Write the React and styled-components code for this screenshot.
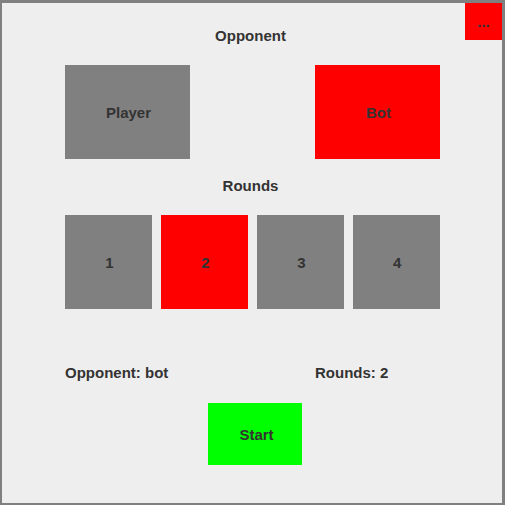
import React, { useState } from 'react'
import styled, { createGlobalStyle } from 'styled-components'

const GlobalStyle = createGlobalStyle`
  html, body {
    margin: 0;
    padding: 0;
    background: #eeeeee;
  }
  * { box-sizing: border-box; }
`;

const Frame = styled.div`
  position: relative;
  width: 505px;
  height: 505px;
  background: #eeeeee;
  border: 2px solid #808080;
  border-top-width: 3px;
  border-right-width: 3px;
  font-family: "Liberation Sans", Arial, sans-serif;
  font-weight: bold;
  font-size: 15px;
  color: #333333;
`;

const MenuButton = styled.button`
  position: absolute;
  top: 0;
  right: 0;
  width: 37px;
  height: 37px;
  border: none;
  padding: 0;
  background: #ff0000;
  color: #333333;
  font-family: inherit;
  font-weight: bold;
  font-size: 15px;
`;

const Content = styled.div`
  display: flex;
  flex-direction: column;
  padding: 0 62px 0 63px;
`;

const Title = styled.div`
  text-align: center;
  line-height: 18px;
  padding-right: 4px;
  margin-top: ${p => p.$top}px;
`;

const OpponentRow = styled.div`
  display: flex;
  justify-content: space-between;
  margin-top: 20px;
`;

const Choice = styled.div`
  display: flex;
  align-items: center;
  justify-content: center;
  width: ${p => p.$w}px;
  height: 94px;
  padding-left: 2px;
  background: ${p => (p.$active ? '#ff0000' : '#808080')};
  cursor: pointer;
`;

const RoundsGrid = styled.div`
  display: grid;
  grid-template-columns: repeat(4, 1fr);
  column-gap: 8.67px;
  margin-top: 20px;
`;

const InfoRow = styled.div`
  display: flex;
  justify-content: space-between;
  margin-top: 55px;
  line-height: 18px;
`;

const Info = styled.div`
  width: 125px;
  white-space: nowrap;
`;

const StartButton = styled.button`
  align-self: flex-start;
  margin: 21px 0 0 143px;
  width: 94px;
  height: 62px;
  border: none;
  padding: 0 0 0 3px;
  background: #00ff00;
  color: #333333;
  font-family: inherit;
  font-weight: bold;
  font-size: 15px;
`;

export default function App() {
  const [opponent, setOpponent] = useState('bot')
  const [rounds, setRounds] = useState(2)

  return (
    <>
      <GlobalStyle />
      <Frame>
        <Content>
          <Title $top={24}>Opponent</Title>
          <OpponentRow>
            <Choice $w={125} $active={opponent === 'player'} onClick={() => setOpponent('player')}>Player</Choice>
            <Choice $w={125} $active={opponent === 'bot'} onClick={() => setOpponent('bot')}>Bot</Choice>
          </OpponentRow>

          <Title $top={18}>Rounds</Title>
          <RoundsGrid>
            {[1, 2, 3, 4].map(n => (
              <Choice key={n} $w={87} $active={rounds === n} onClick={() => setRounds(n)}>{n}</Choice>
            ))}
          </RoundsGrid>

          <InfoRow>
            <Info>Opponent: {opponent}</Info>
            <Info>Rounds: {rounds}</Info>
          </InfoRow>

          <StartButton>Start</StartButton>
        </Content>
        <MenuButton>...</MenuButton>
      </Frame>
    </>
  )
}
